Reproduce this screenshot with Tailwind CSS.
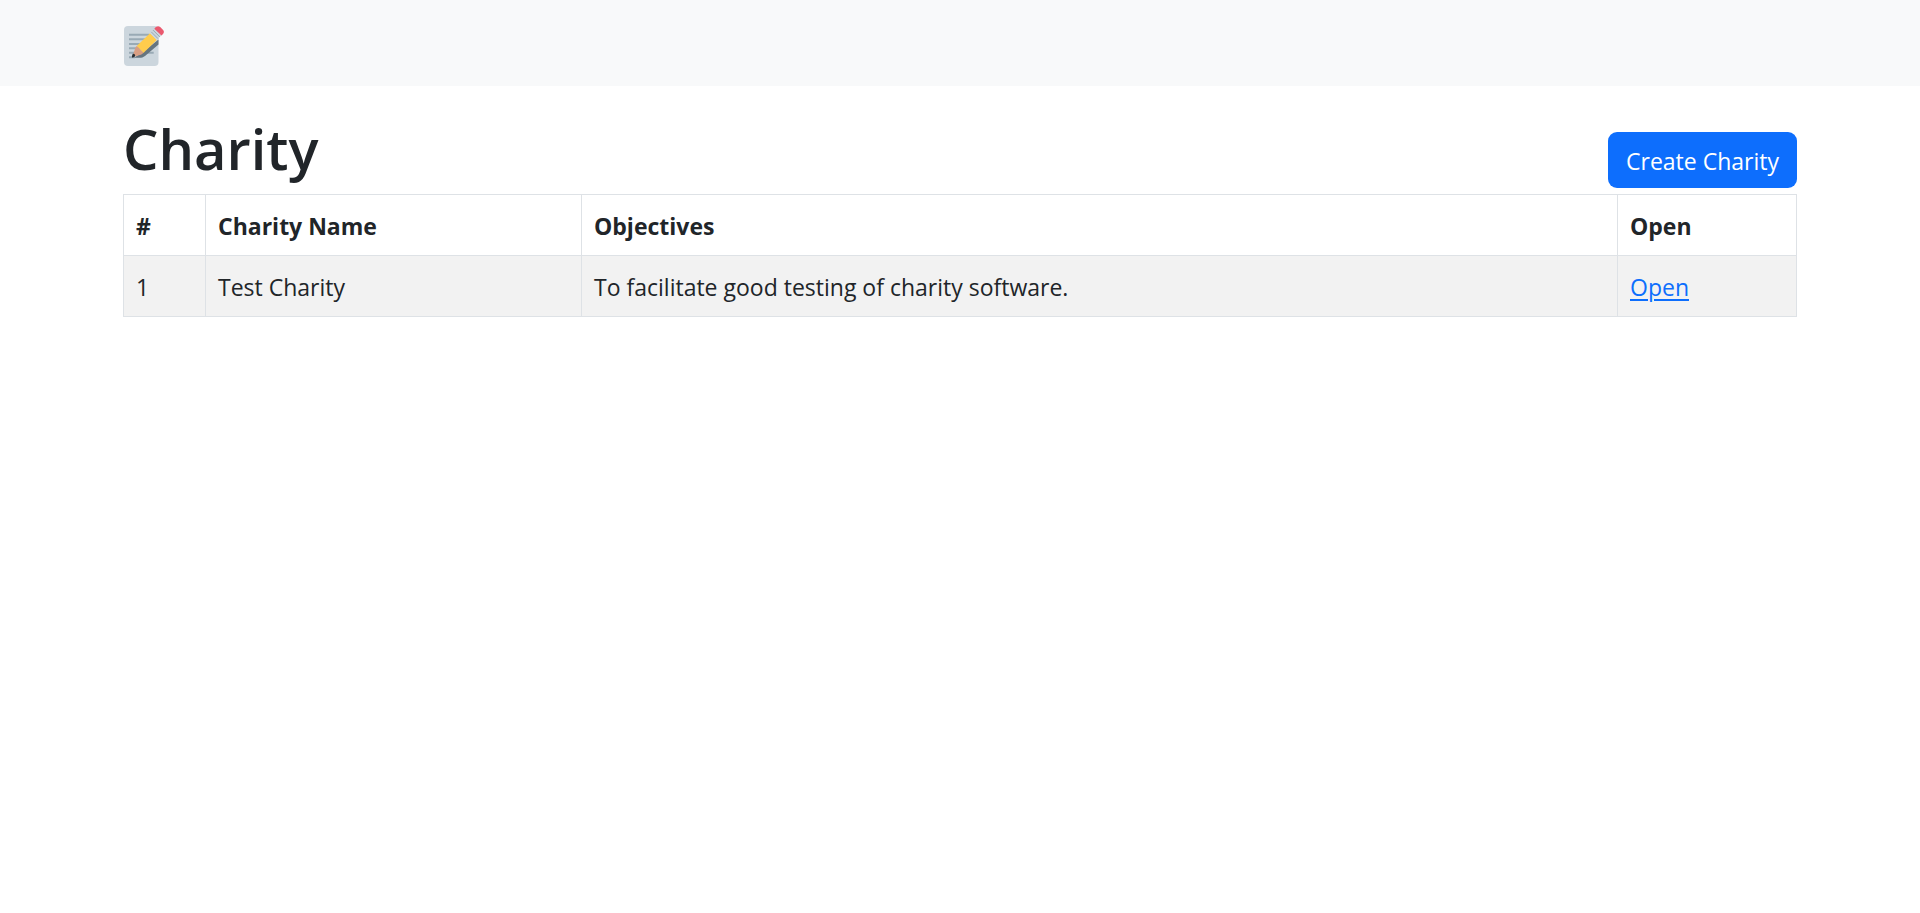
<!DOCTYPE html>
<html lang="en">
<head>
<meta charset="utf-8">
<meta name="viewport" content="width=device-width, initial-scale=1">
<title>Charity</title>
<script src="https://cdn.jsdelivr.net/npm/@tailwindcss/browser@4"></script>
</head>
<body class="bg-white font-['Open_Sans',sans-serif] text-[23px] leading-9 text-[#212529]">
<header class="bg-[#f8f9fa] py-6">
  <nav class="mx-auto flex w-full max-w-[1710px] px-[18px]">
    <a href="#" aria-label="Home" class="block">
      <svg class="block h-[38px] w-[42px]" viewBox="0 0 42 38" overflow="visible" aria-hidden="true">
        <rect x="1" y="2" width="34.500" height="40" rx="4" fill="#ccd6dd"/>
        <path d="M6 10.800h20M6 15.300h20M6 19.900h18M6 24.300h14M6 28.800h24.700M6 33.200h6" stroke="#99aab5" stroke-width="2" fill="none"/>
        <path d="M11 33.800h5.500c2 0 3.800-.6 5.500-1.900L35.500 20.500v-5L20 28z" fill="#66757f"/>
        <path d="M13.700 22L27 9.200l6.800 6.800-13.400 12.900z" fill="#ffcc4d"/>
        <path d="M9.400 33l2.700-8.600c.4-1.200 1-1.900 1.700-2.500l6.700 6.900c-.9.900-1.700 1.500-2.700 1.900z" fill="#d99e82"/>
        <path d="M9.300 33.600c-.7-.5-.3-2.200.5-3.800 1.600-.3 2.600.7 2.300 2.500-1.300 1.100-2.200 1.500-2.800 1.300z" fill="#292f33"/>
        <path d="M27 9.200l4.600-4.800 7 6.900-4.800 4.700z" fill="#ccd6dd"/>
        <path d="M28.300 7.900l6.800 6.800M30 6.100l6.900 6.900" stroke="#99aab5" stroke-width="1"/>
        <path d="M31.300 4.700l1.600-1.600c1.500-1.300 3-1.200 4.300 0l2.700 2.700c1.300 1.300 1.400 2.800.1 4.200l-1.500 1.500z" fill="#ea596e"/>
      </svg>
    </a>
  </nav>
</header>
<main class="mx-auto w-full max-w-[1710px] px-[18px] pt-8">
  <div class="flex items-end justify-between pb-1.5">
    <h1 class="pb-2.5 text-[56px] leading-[60px] font-semibold">Charity</h1>
    <button type="button" class="rounded-[9px] bg-[#0d6efd] px-[18px] pt-[11px] pb-[9px] text-white">Create Charity</button>
  </div>
  <table class="w-full table-fixed border-collapse text-left [&_td]:border [&_td]:border-[#dee2e6] [&_td]:px-3 [&_td]:pt-[13px] [&_td]:pb-[11px] [&_th]:border [&_th]:border-[#dee2e6] [&_th]:px-3 [&_th]:pt-[13px] [&_th]:pb-[11px]">
    <colgroup><col class="w-[82px]"><col class="w-[376px]"><col><col class="w-[179px]"></colgroup>
    <thead><tr><th scope="col">#</th><th scope="col">Charity Name</th><th scope="col">Objectives</th><th scope="col">Open</th></tr></thead>
    <tbody><tr class="bg-[#f2f2f2]"><td>1</td><td>Test Charity</td><td>To facilitate good testing of charity software.</td><td><a href="#" class="text-[#0d6efd] underline decoration-2 underline-offset-3">Open</a></td></tr></tbody>
  </table>
</main>
</body>
</html>
